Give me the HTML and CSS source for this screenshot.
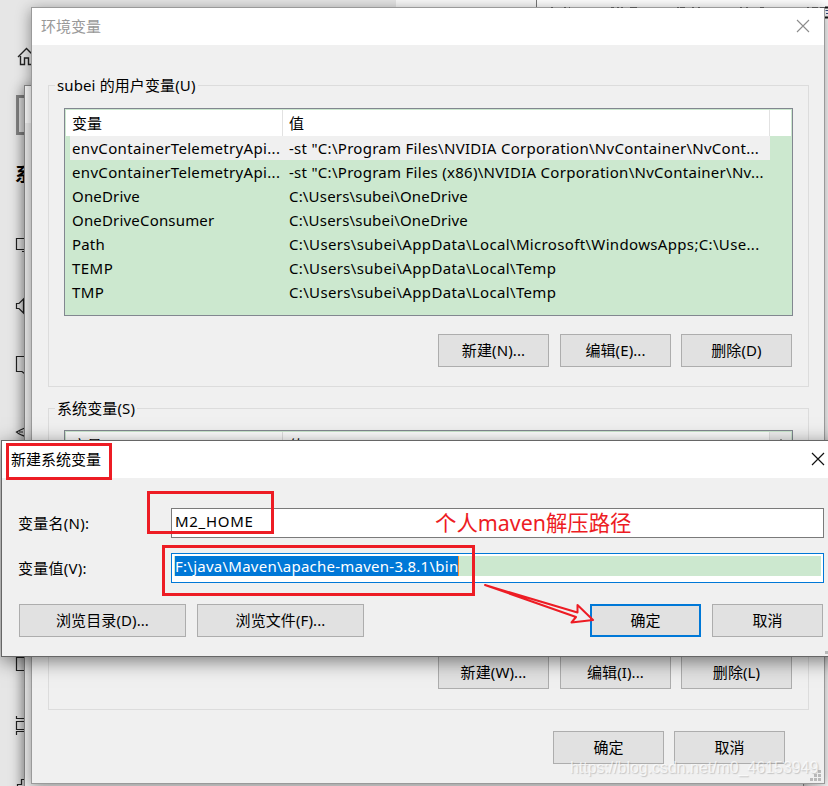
FILE: index.html
```html
<!DOCTYPE html>
<html lang="zh-CN">
<head>
<meta charset="utf-8">
<title>环境变量</title>
<link rel="stylesheet" href="styles.css">
</head>
<body>
<div class="desktop">
  <div class="app-behind"></div>
  <div class="browser-behind"></div>
  <div class="page-behind"></div>
  <svg class="settings-icons" width="32" height="786" viewBox="0 0 32 786" fill="none" stroke="#222" stroke-width="1.2">
    <path d="M18 57 26.500 48.500 35 57M20.500 56V64.500H24.500V58H28.500V64.500H32" stroke-width="1.400"/>
    <path d="M29 96.500H17.500V133.500H29" stroke="#858585" stroke-width="3"/>
    <path d="M30 238.500H16.500V249.500H30M22 251.500H30"/>
    <path d="M16.500 303.500H19L23.500 299V313L19 308.500H16.500Z"/>
    <path d="M30 356.500H16.500V371.500H22L25 374"/>
    <path d="M27 427Q20 430 16.500 432Q20 435 27 437M19 432H23"/>
    <path d="M30 657.500H16.500V670.500H30"/>
    <path d="M16.500 716V718.500H30M30 721.500H16.500V729.500H30M30 731.500H16.500V735"/>
    <path d="M17.500 786V784.500H21.500V779.500H30"/>
  </svg>
  <span class="settings-heading">系</span>
  <div class="props-window"><div class="props-title"></div></div>

  <section class="window env-window">
    <header class="titlebar inactive"><span>环境变量</span>
      <svg width="14" height="14" viewBox="0 0 14 14"><path d="M1 1 13 13M13 1 1 13" stroke="#8c8c8c" stroke-width="1.1"/></svg>
    </header>
    <div class="env-body">
      <div class="group">
        <span class="legend">subei 的用户变量(U)</span>
        <div class="list">
          <div class="list-head"><span class="c1">变量</span><span class="c2">值</span><span class="c3"></span></div>
          <div class="row selected"><span class="c1 long">envContainerTelemetryApi...</span><span class="c2">-st "C:\Program Files\NVIDIA Corporation\NvContainer\NvCont...</span></div>
          <div class="row"><span class="c1 long">envContainerTelemetryApi...</span><span class="c2">-st "C:\Program Files (x86)\NVIDIA Corporation\NvContainer\Nv...</span></div>
          <div class="row"><span class="c1">OneDrive</span><span class="c2 short">C:\Users\subei\OneDrive</span></div>
          <div class="row"><span class="c1">OneDriveConsumer</span><span class="c2 short">C:\Users\subei\OneDrive</span></div>
          <div class="row"><span class="c1">Path</span><span class="c2 path">C:\Users\subei\AppData\Local\Microsoft\WindowsApps;C:\Use...</span></div>
          <div class="row"><span class="c1 upper">TEMP</span><span class="c2 path">C:\Users\subei\AppData\Local\Temp</span></div>
          <div class="row"><span class="c1 upper">TMP</span><span class="c2 path">C:\Users\subei\AppData\Local\Temp</span></div>
        </div>
        <div class="actions"><span class="btn">新建(N)...</span><span class="btn">编辑(E)...</span><span class="btn">删除(D)</span></div>
      </div>
      <div class="group group-system">
        <span class="legend">系统变量(S)</span>
        <div class="list">
          <div class="list-head"><span class="c1">变量</span><span class="c2">值</span><span class="c3 scroll-up"><svg width="10" height="6" viewBox="0 0 10 6"><path d="M1 5 5 1 9 5" fill="none" stroke="#555" stroke-width="1.5"/></svg></span></div>
        </div>
        <div class="actions"><span class="btn">新建(W)...</span><span class="btn">编辑(I)...</span><span class="btn">删除(L)</span></div>
      </div>
      <div class="confirm"><span class="btn">确定</span><span class="btn">取消</span></div>
    </div>
    <svg class="grip" width="11" height="11" viewBox="0 0 11 11" fill="#b9b9b9"><path d="M8 0h3v3H8zM4 4h3v3H4zM8 4h3v3H8zM0 8h3v3H0zM4 8h3v3H4zM8 8h3v3H8z"/></svg>
  </section>
  <svg class="edge-text" width="292" height="20" viewBox="536 0 292 20" stroke="#555" fill="none" stroke-width="1"><path d="M551 7.500h2M564 7.500h2M569 7.500h1M611 7.500h3M617 7.500h2M621 7.500h2M630 7.500h7M677 7.500h2M680 7.500h5M692 7.500h2M698 7.500h2M740 7.500h2M746 7.500h2M760 7.500h4M807 7.500h2M812 7.500h6M820 7.500h5" /><path d="M825 7.500h3M825 17.500h3" stroke="#111" stroke-width="2"/><path d="M825.500 10.500h3M826 13.500h2" stroke="#347"/></svg>

  <section class="window new-window">
    <header class="titlebar"><span>新建系统变量</span>
      <svg width="14" height="14" viewBox="0 0 14 14"><path d="M1 1 13 13M13 1 1 13" stroke="#111" stroke-width="1.2"/></svg>
    </header>
    <div class="new-body">
      <div class="field"><span class="label">变量名(N):</span><div class="input name-input">M2_HOME</div></div>
      <div class="field"><span class="label">变量值(V):</span><div class="input focused"><div class="input-fill"><span class="selection">F:\java\Maven\apache-maven-3.8.1\bin</span></div></div></div>
      <div class="new-actions"><span class="btn wide">浏览目录(D)...</span><span class="btn wide">浏览文件(F)...</span><span class="btn default">确定</span><span class="btn">取消</span></div>
    </div>
    <div class="corner-grip"></div>
  </section>

  <div class="mark mark-title"></div>
  <div class="mark mark-name"></div>
  <div class="mark mark-value"></div>
  <span class="note">个人maven解压路径</span>
  <svg class="arrow" width="120" height="50" viewBox="480 578 120 50" fill="none" stroke="#ed1c24" stroke-width="2" stroke-linejoin="round"><path d="M485 585 577.500 612.500 577.500 605 593 620 571.500 622.500 576 617Z"/></svg>
  <span class="watermark">https://blog.csdn.net/m0_46153949</span>
</div>
</body>
</html>
```
FILE: styles.css
```css
* { box-sizing: border-box; }
body { margin: 0; font: 15px/20px "Noto Sans", "Noto Sans CJK SC", sans-serif; color: #000; }
.desktop { position: relative; width: 828px; height: 786px; overflow: hidden; background: #e6e6e6; }
.app-behind { position: absolute; left: 396px; top: 0; width: 140px; height: 786px; background: #fafafa; }
.browser-behind { position: absolute; left: 536px; top: 0; width: 292px; height: 786px; background: #fff; border-left: 1px solid #777; }
.edge-text { position: absolute; left: 536px; top: 0; }
.page-behind { position: absolute; left: 396px; bottom: 0; width: 241px; height: 10px; background: #eee; border-right: 1px solid #777; }
.settings-icons { position: absolute; left: 0; top: 0; }
.settings-heading { position: absolute; left: 15px; top: 163px; font-size: 18px; font-weight: 700; line-height: 22px; }
.props-window { position: absolute; left: 24px; top: 85px; width: 780px; height: 720px; background: #f0f0f0; border: 1px solid #888; box-shadow: -2px 2px 12px rgba(0,0,0,.4); }
.props-title { height: 37px; background: #fff; }

.window { position: absolute; background: #f0f0f0; }
.env-window { left: 31px; top: 7px; width: 794px; height: 777px; border: 1px solid #9a9a9a; box-shadow: 0 3px 14px rgba(0,0,0,.42); }
.new-window { left: 1px; top: 440px; width: 840px; height: 217px; border: 1px solid #666; box-shadow: 0 4px 18px rgba(0,0,0,.5); }
.titlebar { display: flex; justify-content: space-between; align-items: center; height: 37px; padding: 0 14px 2px 9px; background: #fff; }
.titlebar.inactive { color: #999; }
.new-window .titlebar { padding-right: 15px; }

.env-body { padding: 40px 15px 0 16px; }
.group { display: flex; flex-direction: column; position: relative; height: 302px; padding: 22px 15px 0; border: 1px solid #dcdcdc; }
.group-system { margin-top: 21px; padding-top: 21px; }
.legend { position: absolute; left: 6px; top: -11px; padding: 0 2px; background: #f0f0f0; white-space: nowrap; letter-spacing: .12px; }
.list { height: 208px; padding: 1px; border: 1px solid #828790; background: #cce8cf; }
.list-head { display: flex; height: 26px; line-height: 27px; background: #fff; }
.c1 { width: 217px; padding-left: 6px; white-space: nowrap; flex: none; }
.c2 { width: 487px; padding-left: 6px; white-space: nowrap; flex: none; }
.list-head .c1, .list-head .c2 { border-right: 1px solid #e2e2e2; }
.c3 { flex: 1; }
.scroll-up { display: flex; justify-content: center; padding-top: 7px; background: #f0f0f0; }
.row { display: flex; width: 700px; height: 24px; margin-left: 4px; line-height: 24px; }
.row .c1 { width: 213px; padding-left: 2px; letter-spacing: .18px; }
.row .c1.long { letter-spacing: .33px; }
.row .c1.upper { letter-spacing: .45px; }
.row .c2 { letter-spacing: .28px; }
.row .c2.short { letter-spacing: .18px; }
.row .c2.path { letter-spacing: .34px; }
.selected { background: #f0f0f0; }
.actions { display: flex; gap: 10px; justify-content: flex-end; margin-top: 18px; padding-right: 1px; }
.actions .btn:first-child { margin-right: 1px; }
.btn { display: flex; align-items: center; justify-content: center; width: 111px; height: 33px; padding: 0 0 2px; letter-spacing: .1px; background: #e1e1e1; border: 1px solid #adadad; flex: none; }
.confirm { display: flex; gap: 10px; justify-content: flex-end; margin-top: 21px; padding-right: 24px; }
.grip { position: absolute; right: 3px; bottom: 2px; }

.new-body { display: flex; flex-direction: column; padding: 30px 0 0 16px; }
.field { display: flex; align-items: center; height: 30px; margin-bottom: 15px; }
.label { width: 153px; letter-spacing: .25px; }
.input { width: 653px; height: 30px; border: 1px solid #7a7a7a; background: #fff; line-height: 25px; padding-left: 3px; }
.name-input { letter-spacing: .7px; }
.focused { padding: 2px; border-color: #0078d7; }
.input-fill { height: 20px; background: #cce8cf; line-height: 20px; padding-left: 1px; }
.selection { display: inline-block; height: 20px; line-height: 20px; letter-spacing: .25px; background: #0078d7; color: #fff; border-right: 1px solid #ff8a28; }
.new-actions { display: flex; gap: 11px; width: 804px; margin: 6px 0 0 1px; }
.wide { width: 167px; }
.default { margin-left: auto; border: 2px solid #0078d7; }
.corner-grip { position: absolute; left: 823px; bottom: 2px; width: 3px; height: 3px; background: #b9b9b9; }

.mark { position: absolute; border: 3px solid #ed1c24; }
.mark-title { left: 6px; top: 443px; width: 106px; height: 37px; }
.mark-name { left: 147px; top: 491px; width: 127px; height: 43px; }
.mark-value { left: 162px; top: 545px; width: 313px; height: 51px; }
.note { position: absolute; left: 435px; top: 508px; font-size: 21.4px; line-height: 30px; color: #ed1c24; white-space: nowrap; }
.arrow { position: absolute; left: 480px; top: 578px; }
.watermark { position: absolute; left: 570px; top: 758px; font: 16px/20px "Liberation Sans", sans-serif; letter-spacing: -.05px; color: rgba(255,255,255,.7); text-shadow: 1px 1px 1px rgba(120,120,120,.35); white-space: nowrap; }
```
